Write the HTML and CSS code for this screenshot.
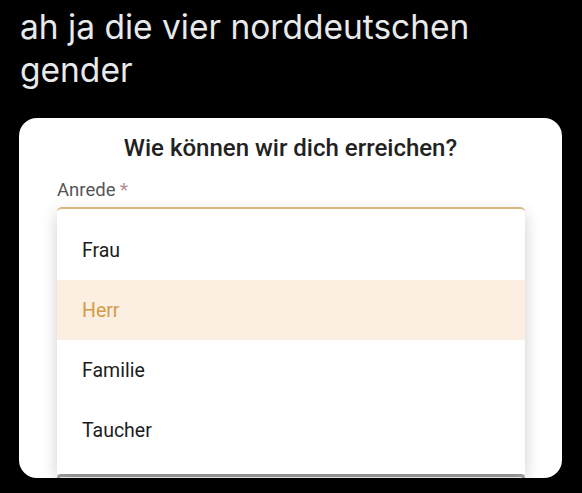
FILE: index.html
```html
<!DOCTYPE html>
<html lang="de">
<head>
    <meta charset="UTF-8">
    <meta name="viewport" content="width=device-width, initial-scale=1.0">
    <title>Anrede</title>
    <link rel="stylesheet" href="styles.css">
</head>
<body>
    <p class="tweet-text">ah ja die vier norddeutschen gender</p>

    <div class="card">
        <h2 class="card-title">Wie können wir dich erreichen?</h2>
        <label class="field-label">Anrede <span class="required">*</span></label>

        <ul class="dropdown">
            <li class="dropdown-item">Frau</li>
            <li class="dropdown-item selected">Herr</li>
            <li class="dropdown-item">Familie</li>
            <li class="dropdown-item">Taucher</li>
        </ul>
        <div class="next-field"></div>
    </div>
</body>
</html>
```

FILE: styles.css
```css
body {
    margin: 0;
    background-color: #000;
    font-family: Inter, 'Liberation Sans', sans-serif;
}

/* Texto do tweet */
.tweet-text {
    margin: 0;
    padding: 6px 20px 0;
    width: 500px;
    font-size: 33.5px;
    line-height: 43px;
    color: #e7e9ea;
}

/* Cartão do formulário */
.card {
    margin: 26px 20px 0 19px;
    height: 360px;
    background-color: #fff;
    border-radius: 18px;
    overflow: hidden;
    font-family: Roboto, sans-serif;
}

.card-title {
    margin: 0;
    padding-top: 15px;
    font-size: 24px;
    font-weight: 500;
    line-height: 30px;
    color: #222;
    text-align: center;
}

.field-label {
    display: block;
    margin: 16px 0 0 38px;
    font-size: 18.5px;
    line-height: 22px;
    color: #555;
}

.required {
    color: #b58b95;
}

/* Menu aberto */
.dropdown {
    list-style: none;
    margin: 6px 37px 0 38px;
    padding: 11px 0 14px;
    background-color: #fff;
    border-top: 2px solid #d8b982;
    border-radius: 5px 5px 0 0;
    box-shadow: 0 6px 16px rgba(0, 0, 0, 0.2);
    position: relative;
    z-index: 1;
}

.dropdown-item {
    height: 60px;
    padding-left: 25px;
    display: flex;
    align-items: center;
    font-size: 19.5px;
    color: #1c1c1c;
}

.dropdown-item.selected {
    background-color: #fdeee2;
    color: #d39b45;
}

.next-field {
    margin: 0 37px 0 38px;
    height: 20px;
    border: 3px solid #a9a9a9;
    border-radius: 4px;
}
```
